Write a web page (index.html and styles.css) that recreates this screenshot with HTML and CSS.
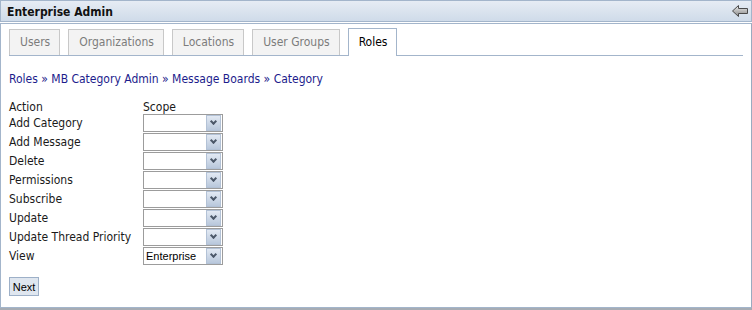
FILE: index.html
```html
<!DOCTYPE html>
<html lang="en">
<head>
  <meta charset="UTF-8">
  <title>Enterprise Admin</title>
  <link rel="stylesheet" href="styles.css">
</head>
<body>
  <div class="portlet">
    <div class="portlet-title">
      <span>Enterprise Admin</span>
      <svg class="back-icon" width="16" height="12" viewBox="0 0 16 12">
        <defs>
          <linearGradient id="arrowFill" x1="0" y1="0" x2="0" y2="1">
            <stop offset="0" stop-color="#f4f4f4"/>
            <stop offset="0.5" stop-color="#b8b8b8"/>
            <stop offset="1" stop-color="#8a8a8a"/>
          </linearGradient>
        </defs>
        <path d="M0.5 6 L6.5 0.5 L6.5 3.5 L15.5 3.5 L15.5 8.5 L6.5 8.5 L6.5 11.5 Z" fill="url(#arrowFill)" stroke="#4a4a4a" stroke-width="1" stroke-linejoin="miter"/>
      </svg>
    </div>

    <div class="portlet-body">
      <ul class="tabs">
        <li>Users</li>
        <li>Organizations</li>
        <li>Locations</li>
        <li>User Groups</li>
        <li class="current">Roles</li>
      </ul>

      <div class="breadcrumbs">
        <a href="#">Roles</a> &raquo; <a href="#">MB Category Admin</a> &raquo; <a href="#">Message Boards</a> &raquo; <a href="#">Category</a>
      </div>

      <table class="perms">
        <tr class="head">
          <td class="action">Action</td>
          <td>Scope</td>
        </tr>
        <tr><td>Add Category</td><td><span class="scope"><select><option></option><option>Enterprise</option></select><span class="arrow"></span></span></td></tr>
        <tr><td>Add Message</td><td><span class="scope"><select><option></option><option>Enterprise</option></select><span class="arrow"></span></span></td></tr>
        <tr><td>Delete</td><td><span class="scope"><select><option></option><option>Enterprise</option></select><span class="arrow"></span></span></td></tr>
        <tr><td>Permissions</td><td><span class="scope"><select><option></option><option>Enterprise</option></select><span class="arrow"></span></span></td></tr>
        <tr><td>Subscribe</td><td><span class="scope"><select><option></option><option>Enterprise</option></select><span class="arrow"></span></span></td></tr>
        <tr><td>Update</td><td><span class="scope"><select><option></option><option>Enterprise</option></select><span class="arrow"></span></span></td></tr>
        <tr><td>Update Thread Priority</td><td><span class="scope"><select><option></option><option>Enterprise</option></select><span class="arrow"></span></span></td></tr>
        <tr><td>View</td><td><span class="scope"><select><option selected>Enterprise</option><option></option></select><span class="arrow"></span></span></td></tr>
      </table>

      <button class="next" type="button">Next</button>
    </div>
  </div>
</body>
</html>
```

FILE: styles.css
```css
:root {
  --color-border: #a3b5cb;
  --color-link: #1c1c8c;
  --color-text: #1a1a1a;
  --color-muted: #7c7c7c;
}

body {
  margin: 0;
  font-family: "DejaVu Sans Condensed", "Liberation Sans", sans-serif;
  font-size: 12px;
  color: var(--color-text);
  background: #fff;
}

.portlet {
  width: 752px;
}

/* title bar */
.portlet-title {
  display: flex;
  align-items: center;
  justify-content: space-between;
  height: 20px;
  padding: 0 3px 0 6px;
  border: 1px solid var(--color-border);
  background: linear-gradient(to bottom, #e6ecf4, #cfdbe9);
  margin-bottom: 1px;
}

.portlet-title span {
  font-weight: bold;
  font-size: 12px;
  color: #111;
  padding-top: 1px;
}

.back-icon {
  display: block;
}

/* body */
.portlet-body {
  border: 1px solid var(--color-border);
  border-right-color: #9aabc0;
  padding: 4px 8px 8px;
  height: 271px;
  box-shadow: 0 3px 0 #a6acb4;
  margin-bottom: 3px;
}

.tabs {
  display: flex;
  gap: 8px;
  list-style: none;
  margin: 0;
  padding: 0;
  height: 27px;
  border-bottom: 1px solid var(--color-border);
}

.tabs li {
  padding: 0 9px 0 10px;
  height: 25px;
  line-height: 25px;
  border: 1px solid #c8c8c8;
  border-bottom: none;
  background: #f3f3f3;
  color: var(--color-muted);
  margin-top: 1px;
}

.tabs li.current {
  background: #fff;
  color: #000;
  border-color: var(--color-border);
  height: 27px;
  margin-top: 0;
  margin-bottom: -1px;
  line-height: 27px;
}

.breadcrumbs {
  margin-top: 16px;
  height: 14px;
  line-height: 14px;
  color: var(--color-link);
}

.breadcrumbs a {
  color: var(--color-link);
  text-decoration: none;
}

.perms {
  border-collapse: collapse;
  margin-top: 15px;
}

.perms td {
  padding: 0;
  height: 19px;
  line-height: 14px;
  vertical-align: middle;
}

.perms tr.head td {
  height: 12px;
  line-height: 12px;
}

.perms td.action {
  width: 134px;
}

.scope {
  position: relative;
  display: block;
  width: 80px;
  height: 18px;
}

.scope select {
  appearance: none;
  -webkit-appearance: none;
  display: block;
  width: 80px;
  height: 18px;
  margin: 0;
  padding: 0 0 0 2px;
  border: 1px solid #9c9c9c;
  border-radius: 0;
  background: #fff;
  font-family: "Liberation Sans", sans-serif;
  font-size: 11px;
  color: #000;
}

.scope .arrow {
  position: absolute;
  top: 1px;
  right: 2px;
  width: 13px;
  height: 14px;
  border: 1px solid #b3c2d6;
  background: linear-gradient(to bottom, #e2e9f3, #b9c8dc);
  pointer-events: none;
}

.scope .arrow::after {
  content: "";
  position: absolute;
  left: 4px;
  top: 3px;
  width: 3px;
  height: 3px;
  border-right: 2px solid #4c5869;
  border-bottom: 2px solid #4c5869;
  transform: rotate(45deg);
}

.next {
  display: block;
  margin-top: 12px;
  height: 19px;
  width: 30px;
  padding: 0;
  border: 1px solid #9db0c8;
  background: #dfe6ef;
  font-family: "Liberation Sans", sans-serif;
  font-size: 11px;
  color: #000;
}
```
